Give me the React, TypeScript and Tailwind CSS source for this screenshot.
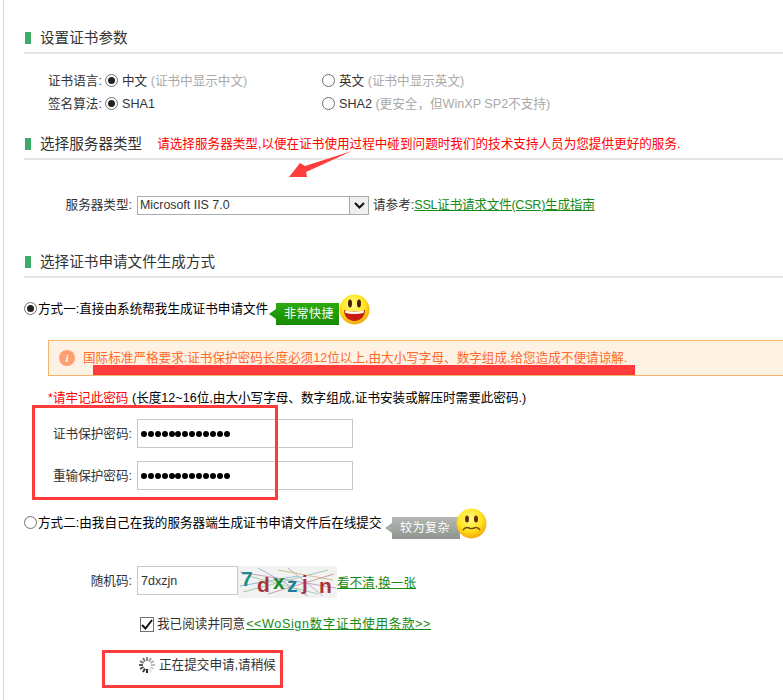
import React from "react";

function Radio({ on, className = "" }: { on?: boolean; className?: string }) {
  return (
    <span className={`flex h-[13px] w-[13px] shrink-0 items-center justify-center rounded-full border border-[#707070] bg-white ${className}`}>
      {on && <span className="block h-[7px] w-[7px] rounded-full bg-[#222]" />}
    </span>
  );
}

function Heading({ title, note }: { title: string; note?: string }) {
  return (
    <div className="flex h-[24px] items-center border-b-2 border-[#e6e6e6] pb-[6px] pl-px">
      <span className="block h-[12px] w-[6px] bg-[#3cab6a]" />
      <span className="ml-[9px] whitespace-nowrap text-[14.6px] text-[#333]">{title}</span>
      {note && <span className="ml-[15px] whitespace-nowrap text-[12.6px] text-[#f00]">{note}</span>}
    </div>
  );
}

function Badge({ text, grey }: { text: string; grey?: boolean }) {
  return (
    <span className="relative mt-[9px] flex h-[22px] shrink-0 items-center">
      <span className={`h-0 w-0 border-y-[5px] border-r-[7px] border-y-transparent ${grey ? "border-r-[#a5aaa5]" : "border-r-[#1c9a0a]"}`} />
      <span className={`flex h-[22px] items-center whitespace-nowrap pl-[8px] text-[12px] tracking-[0.5px] text-white ${grey ? "w-[68px] bg-gradient-to-b from-[#b4b8b4] to-[#8f948f]" : "w-[63px] bg-gradient-to-b from-[#2cab10] to-[#178a04]"}`}>
        {text}
      </span>
    </span>
  );
}

function Smile({ sad, gid }: { sad?: boolean; gid: string }) {
  return (
    <svg width="31" height="31" viewBox="0 0 31 31" className={`relative shrink-0 ${sad ? "-ml-[4px]" : ""}`}>
      <defs>
        <radialGradient id={gid} cx="45%" cy="35%" r="70%">
          <stop offset="0%" stopColor="#fffb8a" />
          <stop offset="55%" stopColor="#ffe51e" />
          <stop offset="100%" stopColor="#f39a0a" />
        </radialGradient>
      </defs>
      <circle cx="15.5" cy="15.5" r="15" fill={`url(#${gid})`} />
      {sad ? (
        <>
          <ellipse cx="11" cy="11" rx="2" ry="3.6" fill="#6b2a0e" />
          <ellipse cx="20" cy="11" rx="2" ry="3.6" fill="#6b2a0e" />
          <path d="M7 22c2-3 4-3 6-2s3 1 5 0 4-1 6 2" fill="none" stroke="#6b4a10" strokeWidth="1.4" />
        </>
      ) : (
        <>
          <ellipse cx="11" cy="9.5" rx="2" ry="4" fill="#4a1a08" />
          <ellipse cx="20" cy="9.5" rx="2" ry="4" fill="#4a1a08" />
          <path d="M5 16c6 2 15 2 21 0 0 7-5 11-10.500 11S5 23 5 16z" fill="#c81a12" />
          <path d="M6 16.500c6 1.500 13 1.500 19 0l-.5 2.500c-6 1.200-12 1.200-18 0z" fill="#fff" />
        </>
      )}
    </svg>
  );
}

function Captcha() {
  const lines = [
    "M2 6 L98 22", "M5 26 L90 4", "M20 2 L70 30", "M40 4 L95 14", "M2 20 L60 10", "M30 28 L96 8", "M10 10 L80 28", "M50 2 L85 30",
  ];
  const colors = ["#c8a0c0", "#a0c8b0", "#b0b0d8", "#d8c090", "#90c0d8", "#d0a0a0", "#a8d0a0", "#c0b0d0"];
  return (
    <svg width="99" height="32" viewBox="0 0 99 32" className="shrink-0 bg-[#f1f3f1]">
      {lines.map((d, i) => (
        <path key={d} d={d} stroke={colors[i]} strokeWidth="1" fill="none" />
      ))}
      <g fontFamily="'Liberation Sans', sans-serif" fontWeight="700" fontSize="21">
        <text x="3" y="20" fill="#1f8a8a">7</text>
        <text x="19" y="26" fill="#a8353a">d</text>
        <text x="35" y="23" fill="#1d8a2d">x</text>
        <text x="49" y="26" fill="#1f7f9a">z</text>
        <text x="64" y="24" fill="#b03040">j</text>
        <text x="81" y="27" fill="#a8353a">n</text>
      </g>
    </svg>
  );
}

function Spinner() {
  const n = 12;
  return (
    <svg width="18" height="18" viewBox="0 0 18 18" className="shrink-0">
      {Array.from({ length: n }).map((_, i) => {
        const g = Math.round(40 + (i / n) * 200);
        return (
          <line key={i} x1="9" y1="1" x2="9" y2="5" stroke={`rgb(${g},${g},${g})`} strokeWidth="2" transform={`rotate(${180 + i * 30} 9 9)`} />
        );
      })}
    </svg>
  );
}

function Pw({ label }: { label: string }) {
  return (
    <div className="flex items-center">
      <span className="w-[132px] text-right">{label}</span>
      <div className="ml-[5px] flex h-[29px] w-[216px] items-center gap-[0.9px] border border-[#c8c8c8] bg-white pl-[3px]">
        {Array.from({ length: 13 }).map((_, i) => (
          <span key={i} className="block h-[6px] w-[6px] rounded-full bg-black" />
        ))}
      </div>
    </div>
  );
}

export default function App() {
  return (
    <div
      className="relative h-[700px] w-[783px] overflow-hidden bg-white text-[12.6px] leading-[16px] text-[#333]"
      style={{ fontFamily: '"Liberation Sans", "Noto Sans CJK SC", sans-serif' }}
    >
      <div className="ml-[3px] h-full border-l border-[#d8d8d8] pl-[20px] pt-[30px]">
        <Heading title="设置证书参数" />

        <div className="mt-[15px] pl-[24px]">
          <div className="flex h-[23px] items-center">
            <span className="w-[57px]">证书语言:</span>
            <Radio on />
            <span className="ml-[4px] w-[200px]">
              中文 <span className="text-[#aaa]">(证书中显示中文)</span>
            </span>
            <Radio />
            <span className="ml-[4px]">
              英文 <span className="text-[#aaa]">(证书中显示英文)</span>
            </span>
          </div>
          <div className="flex h-[23px] items-center">
            <span className="w-[57px]">签名算法:</span>
            <Radio on />
            <span className="ml-[4px] w-[200px]">SHA1</span>
            <Radio />
            <span className="ml-[4px]">
              SHA2 <span className="text-[#aaa]">(更安全，但WinXP SP2不支持)</span>
            </span>
          </div>
        </div>

        <div className="mt-[21px]">
          <Heading title="选择服务器类型" note="请选择服务器类型,以便在证书使用过程中碰到问题时我们的技术支持人员为您提供更好的服务." />
        </div>

        <div className="mt-[35px] flex h-[20px] items-center">
          <span className="w-[108px] text-right">服务器类型:</span>
          <div className="ml-[5px] flex h-[19px] w-[232px] items-center justify-between border border-[#ababab] bg-white pl-[2px] text-[12.4px]">
            <span>Microsoft IIS 7.0</span>
            <span className="flex h-[17px] w-[19px] items-center justify-center border-l border-[#ababab] bg-[#efefef]">
              <svg width="11" height="7" viewBox="0 0 11 7">
                <path d="M1 1l4.500 4.500L10 1" fill="none" stroke="#111" strokeWidth="2" />
              </svg>
            </span>
          </div>
          <span className="ml-[4px]">
            请参考:<span className="tracking-[-0.25px] text-[#178a17] underline">SSL证书请求文件(CSR)生成指南</span>
          </span>
        </div>

        <div className="mt-[39px]">
          <Heading title="选择证书申请文件生成方式" />
        </div>

        <div className="mt-[20px] flex h-[22px] items-center">
          <Radio on className="-mt-[2px]" />
          <span className="ml-px w-[231px] whitespace-nowrap text-black">方式一:直接由系统帮我生成证书申请文件</span>
          <Badge text="非常快捷" />
          <Smile gid="happy" />
        </div>

        <div className="-mr-px ml-[24px] mt-[20px] flex h-[36px] items-center border-y border-l border-[#f5b56f] bg-[#fef2e4] pl-[10px]">
          <span className="flex h-[16px] w-[16px] items-center justify-center rounded-full bg-[#ff9e70] text-[11px] font-bold italic text-white" style={{ fontFamily: '"Liberation Serif", serif' }}>
            i
          </span>
          <span className="ml-[8px] text-[#ff6a2a]">国际标准严格要求:证书保护密码长度必须12位以上,由大小写字母、数字组成,给您造成不便请谅解.</span>
        </div>

        <div className="mt-[14px] h-[16px] pl-[24px] text-black">
          <span className="text-[#f00]">*请牢记此密码</span> (长度12~16位,由大小写字母、数字组成,证书安装或解压时需要此密码.)
        </div>

        <div className="-ml-[24px] mt-[13px] flex flex-col gap-[13px]">
          <Pw label="证书保护密码:" />
          <Pw label="重输保护密码:" />
        </div>

        <div className="mt-[22px] flex h-[22px] items-center">
          <Radio className="-mt-[2px]" />
          <span className="ml-px w-[347px] whitespace-nowrap text-black">方式二:由我自己在我的服务器端生成证书申请文件后在线提交</span>
          <Badge text="较为复杂" grey />
          <Smile sad gid="sad" />
        </div>

        <div className="-ml-[24px] mt-[32px] flex items-start">
          <span className="mt-[7px] w-[132px] text-right">随机码:</span>
          <div className="ml-[5px] flex h-[29px] w-[101px] items-center border border-[#c8c8c8] pl-[3px] text-[12.500px]">7dxzjn</div>
          <Captcha />
          <span className="mt-[9px] whitespace-nowrap text-[#178a17] underline">看不清,换一张</span>
        </div>

        <div className="-ml-[24px] mt-[16px] flex h-[20px] items-center pl-[140px]">
          <span className="flex h-[15px] w-[14px] items-center justify-center border border-[#707070] bg-white">
            <svg width="12" height="11" viewBox="0 0 12 11">
              <path d="M1 6l3.500 3.500L11 1" fill="none" stroke="#111" strokeWidth="2" />
            </svg>
          </span>
          <span className="ml-[3px]">我已阅读并同意</span>
          <span className="ml-px tracking-[0.6px] text-[#178a17] underline">&lt;&lt;WoSign数字证书使用条款&gt;&gt;</span>
        </div>

        <div className="-ml-[24px] mt-[21px] flex h-[20px] items-center pl-[138px]">
          <Spinner />
          <span className="ml-[3px]">正在提交申请,请稍候</span>
        </div>
      </div>

      <svg className="absolute left-[285px] top-[148px]" width="70" height="32" viewBox="285 148 70 32">
        <path d="M352 151L305 166L300 163L289 177L307 177L306 172Z" fill="#ff3b3b" />
      </svg>
      <div className="absolute left-[93px] top-[365px] h-[10px] w-[542px] bg-[#ff3b3b]" />
      <div className="absolute left-[32px] top-[405px] h-[95px] w-[246px] border-[3px] border-[#ff3b3b]" />
      <div className="absolute left-[102px] top-[650px] h-[38px] w-[181px] border-[3px] border-[#ff3b3b]" />
    </div>
  );
}
